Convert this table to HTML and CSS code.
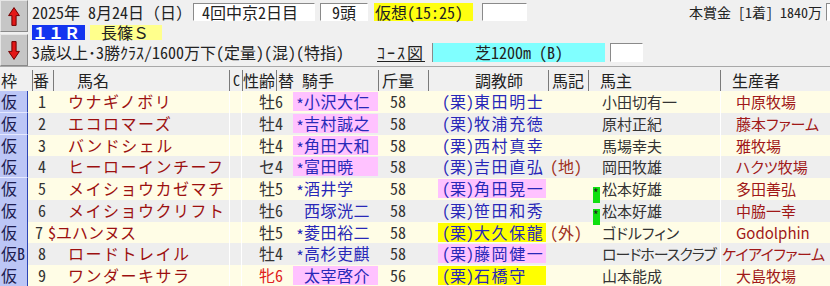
FILE: index.html
```html
<!DOCTYPE html>
<html lang="ja">
<head>
<meta charset="utf-8">
<title>出馬表</title>
<link rel="stylesheet" href="styles.css">
</head>
<body>
<div class="top">
  <div class="arrows">
    <div class="btn"><svg width="12" height="19" viewBox="0 0 12 19"><path d="M6 .6 11.4 8.6H8.1V18.4H3.9V8.6H.6Z" fill="#e41818" stroke="#700000" stroke-width="1"/></svg></div>
    <div class="btn"><svg width="12" height="19" viewBox="0 0 12 19"><path d="M6 18.4 11.4 10.4H8.1V.6H3.9V10.4H.6Z" fill="#e41818" stroke="#700000" stroke-width="1"/></svg></div>
  </div>
  <div class="info">
    <div class="line l1">
      <span class="date">2025年 8月24日<span class="fw">（日）</span></span>
      <span class="box white kai">4回中京2日目</span>
      <span class="box white heads">9頭</span>
      <span class="box yellow yoso">仮想(15:25)</span>
      <span class="box white empty"></span>
      <span class="prize">本賞金 [1着] 1840万</span>
      <span class="box white edge"></span>
    </div>
    <div class="line l2">
      <span class="race">１１Ｒ</span>
      <span class="rname">長篠Ｓ</span>
    </div>
    <div class="line l3">
      <span class="cond">3歳以上･3勝ｸﾗｽ/1600万下(定量)(混)(特指)</span>
      <span class="course">ｺｰｽ図</span>
      <span class="box cyan">芝1200m (B)</span>
      <span class="box white small"></span>
    </div>
  </div>
</div>

<div class="table">
  <div class="thead">
    <div class="th h-waku">枠</div>
    <div class="th h-ban">番</div>
    <div class="th h-name">馬名</div>
    <div class="th h-c">C</div>
    <div class="th h-sex">性齢</div>
    <div class="th h-jk">替　騎手</div>
    <div class="th h-kin">斤量</div>
    <div class="th h-tr">調教師</div>
    <div class="th h-ki">馬記</div>
    <div class="th h-own">馬主</div>
    <div class="th h-br">生産者</div>
  </div>

  <div class="row odd">
    <div class="waku">仮</div><div class="ban">1</div><div class="name">ウナギノボリ</div><div class="c"></div><div class="sex">牡6</div><div class="kae"></div>
    <div class="jk pink"><span class="ast">*</span>小沢大仁</div><div class="kin">58</div>
    <div class="tr"><span class="zai">(栗)</span>東田明士</div><div class="ki"></div><div class="own">小田切有一</div><div class="br">中原牧場</div>
  </div>
  <div class="row even">
    <div class="waku">仮</div><div class="ban">2</div><div class="name">エコロマーズ</div><div class="c"></div><div class="sex">牡4</div><div class="kae"></div>
    <div class="jk pink"><span class="ast">*</span>吉村誠之</div><div class="kin">58</div>
    <div class="tr"><span class="zai">(栗)</span>牧浦充徳</div><div class="ki"></div><div class="own">原村正紀</div><div class="br">藤本ファーム</div>
  </div>
  <div class="row odd">
    <div class="waku">仮</div><div class="ban">3</div><div class="name">バンドシェル</div><div class="c"></div><div class="sex">牡4</div><div class="kae"></div>
    <div class="jk pink"><span class="ast">*</span>角田大和</div><div class="kin">58</div>
    <div class="tr"><span class="zai">(栗)</span>西村真幸</div><div class="ki"></div><div class="own">馬場幸夫</div><div class="br">雅牧場</div>
  </div>
  <div class="row even">
    <div class="waku">仮</div><div class="ban">4</div><div class="name">ヒーローインチーフ</div><div class="c"></div><div class="sex">セ4</div><div class="kae"></div>
    <div class="jk pink"><span class="ast">*</span>富田暁</div><div class="kin">58</div>
    <div class="tr"><span class="zai">(栗)</span>吉田直弘</div><div class="ki">(地)</div><div class="own">岡田牧雄</div><div class="br">ハクツ牧場</div>
  </div>
  <div class="row odd">
    <div class="waku">仮</div><div class="ban">5</div><div class="name">メイショウカゼマチ</div><div class="c"></div><div class="sex">牡5</div><div class="kae"></div>
    <div class="jk"><span class="ast">*</span>酒井学</div><div class="kin">58</div>
    <div class="tr pink"><span class="zai">(栗)</span>角田晃一</div><div class="ki"></div><div class="own"><span class="gm">*</span>松本好雄</div><div class="br">多田善弘</div>
  </div>
  <div class="row even">
    <div class="waku">仮</div><div class="ban">6</div><div class="name">メイショウクリフト</div><div class="c"></div><div class="sex">牡6</div><div class="kae"></div>
    <div class="jk"><span class="ast"></span>西塚洸二</div><div class="kin">58</div>
    <div class="tr"><span class="zai">(栗)</span>笹田和秀</div><div class="ki"></div><div class="own"><span class="gm">*</span>松本好雄</div><div class="br">中脇一幸</div>
  </div>
  <div class="row odd">
    <div class="waku">仮</div><div class="ban seven">7</div><div class="name dollar">$ユハンヌス</div><div class="c"></div><div class="sex">牡5</div><div class="kae"></div>
    <div class="jk"><span class="ast">*</span>菱田裕二</div><div class="kin">58</div>
    <div class="tr yel"><span class="zai">(栗)</span>大久保龍</div><div class="ki">(外)</div><div class="own">ゴドルフィン</div><div class="br">Godolphin</div>
  </div>
  <div class="row even">
    <div class="waku">仮B</div><div class="ban">8</div><div class="name">ロードトレイル</div><div class="c"></div><div class="sex">牡4</div><div class="kae"></div>
    <div class="jk"><span class="ast">*</span>高杉吏麒</div><div class="kin">58</div>
    <div class="tr pink"><span class="zai">(栗)</span>藤岡健一</div><div class="ki"></div><div class="own long">ロードホースクラブ</div><div class="br long">ケイアイファーム</div>
  </div>
  <div class="row odd">
    <div class="waku">仮</div><div class="ban">9</div><div class="name">ワンダーキサラ</div><div class="c"></div><div class="sex mare">牝6</div><div class="kae"></div>
    <div class="jk pink"><span class="ast"></span>太宰啓介</div><div class="kin">56</div>
    <div class="tr yel"><span class="zai">(栗)</span>石橋守</div><div class="ki"></div><div class="own">山本能成</div><div class="br">大島牧場</div>
  </div>
</div>
</body>
</html>
```

FILE: styles.css
```css
* { box-sizing: border-box; margin: 0; padding: 0; }

body {
  width: 830px;
  height: 286px;
  overflow: hidden;
  background: #f0f0f0;
  font-family: "Noto Sans CJK JP", "Noto Sans", sans-serif;
  font-size: 16px;
  color: #222;
  font-feature-settings: "hwid" 1;
}

.top {
  display: flex;
  height: 67px;
  border-bottom: 1px solid #a8a8a8;
  overflow: hidden;
}

.arrows {
  width: 28px;
  display: flex;
  flex-direction: column;
  gap: 2px;
}

.btn {
  height: 32px;
  background: #c6c6c6;
  border: 1px solid;
  border-color: #e6e6e6 #8a8a8a #8a8a8a #e6e6e6;
  display: flex;
  align-items: center;
  justify-content: center;
}

.info {
  flex: 1;
  padding: 3px 0 0 4px;
  display: flex;
  flex-direction: column;
}

.line {
  display: flex;
  align-items: center;
  white-space: nowrap;
}

.l1 { height: 18px; }
.l2 { height: 15px; margin-top: 4px; }
.l3 { height: 19px; margin-top: 3px; }

.date { line-height: 18px; width: 161px; }
.fw { font-feature-settings: normal; }

.box {
  display: block;
  height: 100%;
  line-height: 16px;
}

.white {
  background: #fff;
  border: 1px solid;
  border-color: #8a8a8a #fff #fff #8a8a8a;
}

.kai { width: 122px; padding-left: 8px; }
.heads { width: 48px; margin-left: 5px; text-align: center; }
.yoso {
  width: 99px;
  margin-left: 6px;
  padding-left: 1px;
  background: #ffff10;
  line-height: 18px;
}
.empty { width: 45px; margin-left: 9px; }

.prize {
  margin-left: auto;
  font-size: 14px;
  line-height: 18px;
}

.edge { width: 4px; margin-left: 4px; border-right: 0; }

.race {
  width: 53px;
  height: 15px;
  background: #1434f0;
  color: #fff;
  font-weight: bold;
  line-height: 15px;
  font-feature-settings: normal;
}

.rname {
  width: 72px;
  height: 15px;
  margin-left: 5px;
  padding-left: 11px;
  background: #ffff8c;
  line-height: 15px;
  font-feature-settings: normal;
}

.cond { width: 345px; line-height: 19px; }

.course {
  width: 55px;
  line-height: 17px;
  letter-spacing: 2px;
  text-decoration: underline;
  text-underline-offset: 2px;
}

.cyan {
  width: 173px;
  background: #80ffff;
  text-align: center;
  line-height: 19px;
  border-left: 1px solid #8a8a8a;
}

.small { width: 33px; margin-left: 5px; }

.thead {
  display: grid;
  grid-template-columns: 32px 21px 176px 13px 34px 102px 50px 120px 40px 132px 110px;
  height: 24px;
}

.th {
  height: 21px;
  margin-top: 3px;
  line-height: 21px;
  font-size: 16px;
  white-space: nowrap;
  border-left: 1px solid #7a7a7a;
}

.h-waku { border-left: 0; padding-left: 1px; }
.h-name { padding-left: 23px; }
.h-c { padding-left: 3px; font-size: 14px; }
.h-jk { padding-left: 1px; }
.h-kin { padding-left: 3px; }
.h-tr { padding-left: 46px; }
.h-ki { padding-left: 3px; }
.h-own { padding-left: 11px; }
.h-br { padding-left: 11px; }

.row {
  display: grid;
  grid-template-columns: 28px 24px 177px 13px 36px 15px 85px 60px 108px 44px 130px 110px;
  height: 21.75px;
  line-height: 21.75px;
  white-space: nowrap;
}

.odd { background: #fffde6; }
.even { background: #eeeeee; }

.waku {
  background: #bcc6f6;
  border-right: 1px solid #2c44b4;
  border-bottom: 1px solid #e4e8ff;
  padding-left: 1px;
  color: #1c1c50;
  line-height: 21px;
}

.ban { text-align: right; padding-right: 6px; color: #333; }
.ban.seven { padding-right: 9px; }

.name {
  color: #9c1010;
  padding-left: 16px;
  letter-spacing: 1.5px;
}

.name.dollar { padding-left: 0; margin-left: -4px; letter-spacing: 0; }

.c { border-left: 1px solid #fff; border-right: 1px solid #fff; }

.sex { padding-left: 17px; color: #333; }
.sex.mare { color: #e02020; }

.jk {
  color: #2828b8;
  padding-left: 3px;
  letter-spacing: 0.5px;
}

.ast {
  display: inline-block;
  width: 8px;
  letter-spacing: 0;
  vertical-align: -3px;
}

.pink, .yel {
  height: 19px;
  margin-top: 1px;
  line-height: 19px;
}
.pink { background: #ffc2ff; }
.yel { background: #ffff00; }

.kin { padding-left: 12px; color: #333; }

.tr {
  color: #2828b8;
  padding-left: 4px;
  letter-spacing: 1.6px;
}

.zai { letter-spacing: 0; }

.ki { padding-left: 4px; color: #a03020; }

.own {
  padding-left: 12px;
  font-size: 15px;
  color: #333;
  font-feature-settings: "palt" 1;
}

.own.long { letter-spacing: -1px; }

.gm {
  display: inline-block;
  width: 7px;
  height: 16px;
  margin-left: -9px;
  margin-right: 2px;
  background: #10e010;
  font-size: 12px;
  line-height: 12px;
  vertical-align: -3px;
  color: #222;
  letter-spacing: 0;
}

.br {
  padding-left: 15px;
  font-size: 15px;
  color: #a01818;
  border-left: 1px solid #fff;
  font-feature-settings: "palt" 1;
}

.br.long { padding-left: 1px; letter-spacing: -0.5px; }
```
